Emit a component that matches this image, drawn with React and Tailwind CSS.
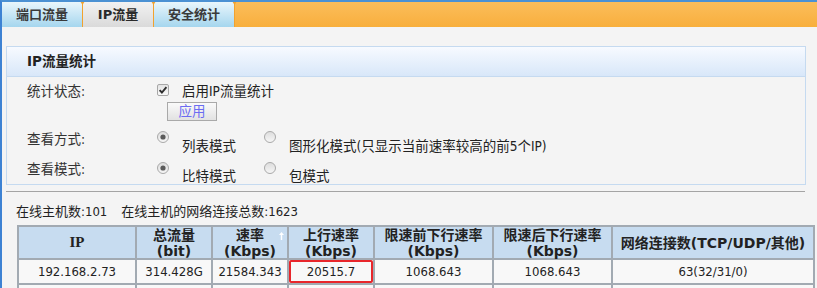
import React from "react";

const base = "font-['DejaVu_Sans_Condensed','Liberation_Sans','Noto_Sans_CJK_SC',sans-serif]";
const bold = "font-['DejaVu_Sans','Noto_Sans_CJK_SC',sans-serif] font-bold";

function Sep() {
	return (
		<div className="relative w-px bg-[#f2a22e]">
			<svg className="absolute -top-px left-[-2px]" width="5" height="4" viewBox="0 0 5 4">
				<path d="M0 0 L5 0 L2.5 4 Z" fill="#f2a22e" />
			</svg>
		</div>
	);
}

function Checkbox() {
	return (
		<svg width="12" height="12" viewBox="0 0 12 12" className="block">
			<defs>
				<linearGradient id="cbg" x1="0" y1="0" x2="0" y2="1">
					<stop offset="0" stopColor="#e2e2e2" />
					<stop offset="1" stopColor="#fafafa" />
				</linearGradient>
			</defs>
			<rect x="0.5" y="0.5" width="11" height="11" rx="1.5" fill="url(#cbg)" stroke="#a7a7a7" />
			<path d="M2.6 6.1 L4.9 8.5 L9.4 3.2" fill="none" stroke="#2e2e2e" strokeWidth="1.9" />
		</svg>
	);
}

function Radio({ checked }) {
	return (
		<svg width="12" height="12" viewBox="0 0 12 12" className="block">
			<defs>
				<linearGradient id="rdg" x1="0" y1="0" x2="0" y2="1">
					<stop offset="0" stopColor="#dcdcdc" />
					<stop offset="1" stopColor="#f7f7f7" />
				</linearGradient>
			</defs>
			<circle cx="6" cy="6" r="5.5" fill="url(#rdg)" stroke="#a9a9a9" />
			{checked && <circle cx="6" cy="6" r="2.6" fill="#5a5a5a" />}
		</svg>
	);
}

const cols = [116, 74, 74, 84, 117, 117, 200];

function Head({ top, bottom, children }) {
	return (
		<th className="relative p-0">
			<div className="flex h-[31px] flex-col items-center justify-center leading-[16px]">
				<span className="h-[16px]">{top}</span>
				{bottom && <span className="h-[16px]">{bottom}</span>}
			</div>
			{children}
		</th>
	);
}

function Cell({ children }) {
	return (
		<td className="p-0">
			<div className="h-[23px] leading-[23px]">{children}</div>
		</td>
	);
}

export default function App() {
	return (
		<div className={`w-[817px] h-[288px] overflow-hidden bg-[#f4f4f4] border-l-2 border-t-2 border-l-[#3d82d3] border-t-[#4b91d3] text-[13px] text-[#222] ${base}`}>
			{/* tabs */}
			<div className="flex h-[25px] bg-gradient-to-b from-[#fbbd5a] to-[#f8af3c]">
				<div className={`w-[80px] h-[25px] text-center leading-[25px] text-[#3a3a3a] bg-gradient-to-b from-[#e9f6fc] to-[#a5d6ee] ${bold}`}>端口流量</div>
				<Sep />
				<div className={`w-[70px] h-[25px] text-center leading-[25px] text-[#2a2a2a] bg-gradient-to-b from-[#f2f2f2] to-[#dadada] ${bold}`}>IP流量</div>
				<Sep />
				<div className={`w-[80px] h-[25px] text-center leading-[25px] text-[#3a3a3a] bg-gradient-to-b from-[#e9f6fc] to-[#a5d6ee] ${bold}`}>安全统计</div>
				<Sep />
				<div className="flex-1" />
			</div>

			{/* settings box */}
			<div className="mt-[19px] ml-[4px] w-[800px] border border-[#c5daf0]">
				<div className={`h-[30px] border-b border-[#c5daf0] bg-gradient-to-b from-[#f7faff] to-[#d8e7f9] pl-[20px] leading-[29px] text-[13.5px] text-[#222] ${bold}`}>
					IP流量统计
				</div>
				<div className="h-[107px] overflow-hidden pl-[20px] text-[13.5px]">
					<div className="mt-[5px] flex h-[18px]">
						<div className="w-[130px] h-[18px] leading-[18px] text-[#333]">统计状态:</div>
						<div className="w-[25px] pt-[2px]"><Checkbox /></div>
						<div className="h-[18px] leading-[18px]">启用IP流量统计</div>
					</div>
					<button className="ml-[140px] mt-[2px] block h-[19px] w-[50px] border border-[#a9a9a9] bg-gradient-to-b from-[#fafafa] to-[#e2e2e2] text-[13.5px] leading-[17px] text-[#6b6cf2]">
						应用
					</button>
					<div className="mt-[9px] flex h-[25px] items-start">
						<div className="w-[130px] h-[18px] leading-[18px] text-[#333]">查看方式:</div>
						<div className="w-[25px] pt-[1px]"><Radio checked /></div>
						<div className="w-[82px] h-[18px] mt-[7px] leading-[18px]">列表模式</div>
						<div className="w-[25px] pt-[1px]"><Radio /></div>
						<div className="h-[18px] mt-[7px] leading-[18px]">图形化模式(只显示当前速率较高的前5个IP)</div>
					</div>
					<div className="mt-[5px] flex h-[24px] items-start">
						<div className="w-[130px] h-[18px] leading-[18px] text-[#333]">查看模式:</div>
						<div className="w-[25px] pt-[2px]"><Radio checked /></div>
						<div className="w-[82px] h-[16px] mt-[8px] leading-[16px]">比特模式</div>
						<div className="w-[25px] pt-[2px]"><Radio /></div>
						<div className="h-[16px] mt-[8px] leading-[16px]">包模式</div>
					</div>
				</div>
			</div>

			<div className="mt-[6px] ml-[4px] h-px w-[799px] bg-[#a4a4a4]" />

			<div className="mt-[11px] ml-[14px] flex h-[18px] leading-[18px]">
				<span>在线主机数:101</span>
				<span className="ml-[14px]">在线主机的网络连接总数:1623</span>
			</div>

			{/* host table */}
			<table className="mt-[4px] ml-[15px] w-[798px] table-fixed border-separate border-spacing-[2px] bg-[#a2aab2]">
				<colgroup>
					{cols.map((w, i) => (
						<col key={i} style={{ width: w }} />
					))}
				</colgroup>
				<thead>
					<tr className={`bg-[#c7dcf0] text-[14px] text-[#222] ${bold}`}>
						<th className="p-0">
							<div className="h-[31px] font-['Liberation_Serif',serif] text-[15px] leading-[31px]">IP</div>
						</th>
						<Head top="总流量" bottom="(bit)" />
						<Head top="速率" bottom="(Kbps)">
							<svg className="absolute right-[3px] top-[5px]" width="5" height="8" viewBox="0 0 5 8">
								<path d="M2.5 0 L5 3 L3.2 3 L3.2 8 L1.8 8 L1.8 3 L0 3 Z" fill="#ffffff" />
							</svg>
						</Head>
						<Head top="上行速率" bottom="(Kbps)" />
						<Head top="限速前下行速率" bottom="(Kbps)" />
						<Head top="限速后下行速率" bottom="(Kbps)" />
						<Head top="网络连接数(TCP/UDP/其他)" />
					</tr>
				</thead>
				<tbody>
					<tr className="bg-[#f8f8f8] text-center">
						<Cell>192.168.2.73</Cell>
						<Cell>314.428G</Cell>
						<Cell>21584.343</Cell>
						<td className="p-0">
							<div className="h-[23px] rounded-[2px] border-2 border-[#e8262b] leading-[19px]">20515.7</div>
						</td>
						<Cell>1068.643</Cell>
						<Cell>1068.643</Cell>
						<Cell>63(32/31/0)</Cell>
					</tr>
					<tr className="bg-[#f8f8f8]">
						{cols.map((w, i) => (
							<td key={i} className="h-[23px] p-0" />
						))}
					</tr>
				</tbody>
			</table>
		</div>
	);
}
